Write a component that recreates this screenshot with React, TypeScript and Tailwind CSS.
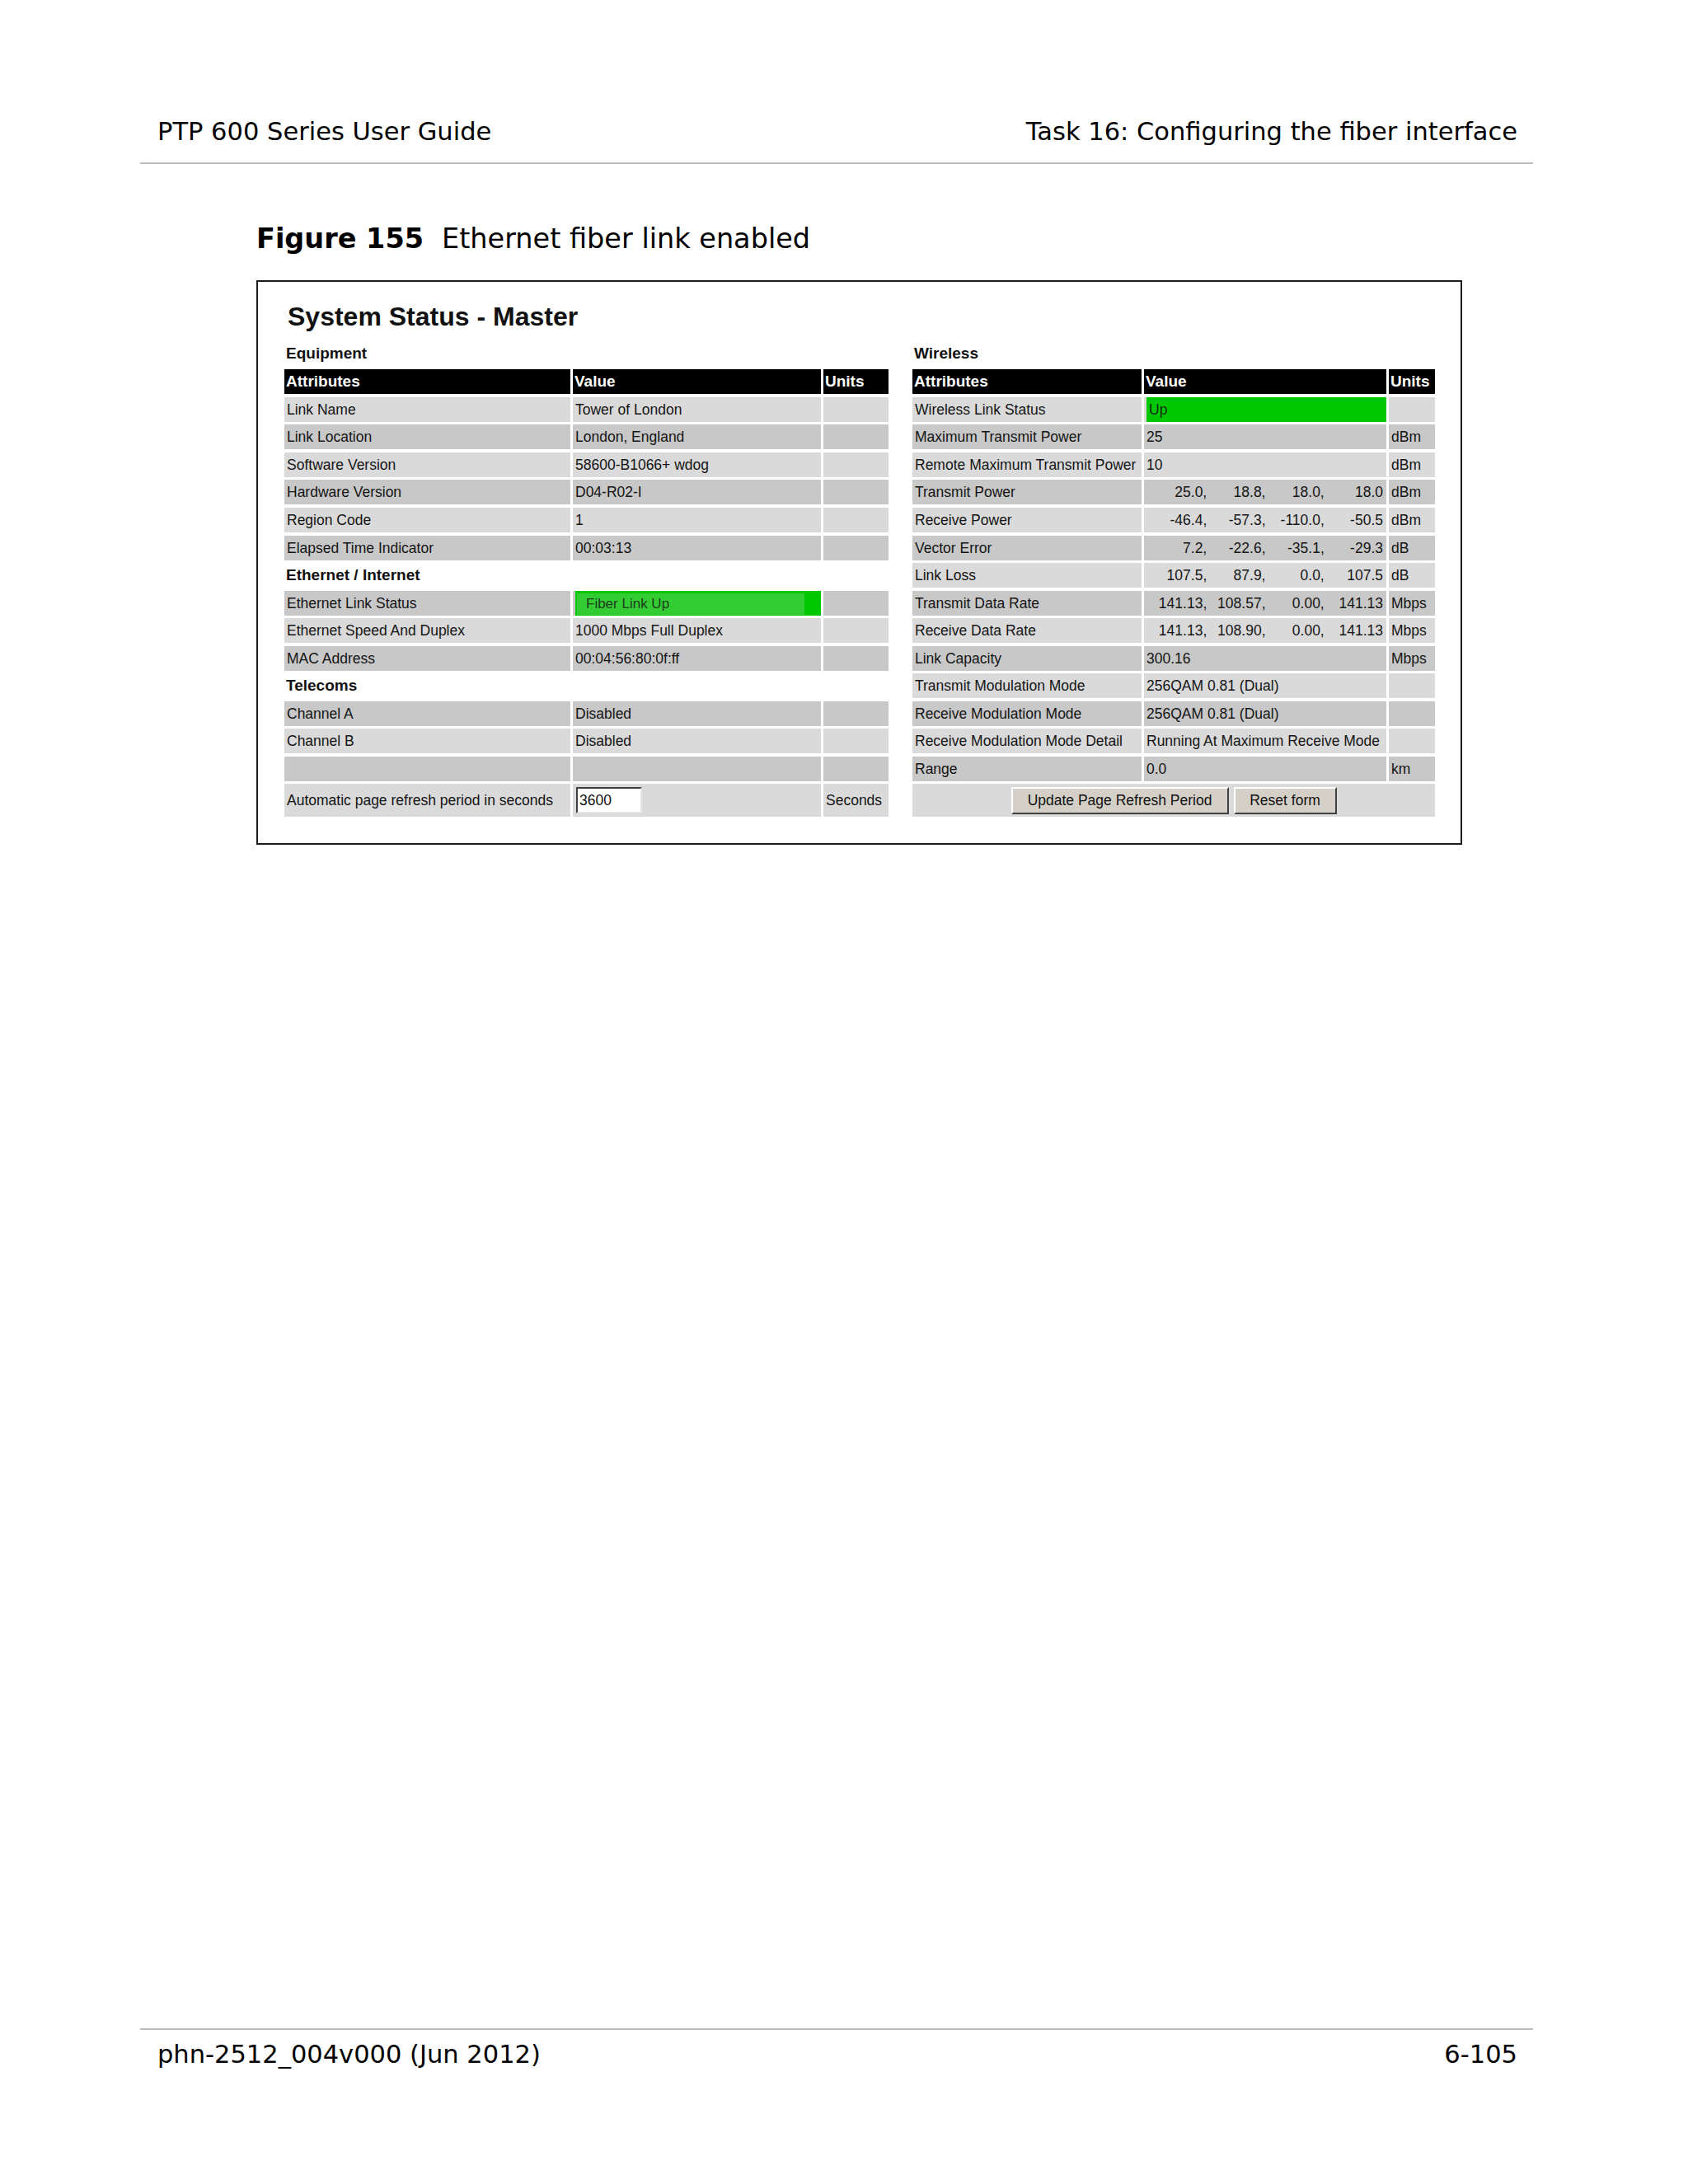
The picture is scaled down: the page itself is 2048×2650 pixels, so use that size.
type Row = {
  kind: 'label' | 'header' | 'row' | 'empty'
  label?: string
  attr?: string
  value?: React.ReactNode
  units?: string
  dark?: boolean
}

const cellText = 'text-[17.5px] leading-[30px] text-[#151515] pl-[3px] whitespace-nowrap overflow-hidden'

function Multi({ values }: { values: string[] }) {
  return (
    <div className="grid grid-cols-4 w-full pl-[2px] pr-[4px]">
      {values.map((v, i) => (
        <span key={i} className="text-right whitespace-pre">
          {v}
        </span>
      ))}
    </div>
  )
}

function FiberUp() {
  return (
    <div className="h-full w-full bg-[#00c800] pt-[3px] pb-[1px] pl-[2px]">
      <div className="h-full w-[276px] bg-[#33cc33] flex items-center pl-[11px] text-[#1d3d1d] text-[17px]">
        Fiber Link Up
      </div>
    </div>
  )
}

function StatusTable({ rows, cols }: { rows: Row[]; cols: string }) {
  return (
    <div className={`grid ${cols} gap-x-[3px] gap-y-[3.56px] auto-rows-[30px]`}>
      {rows.map((r, i) => {
        if (r.kind === 'label') {
          return (
            <div key={i} className="col-span-3 flex items-center pl-[2px] text-[19px] font-bold text-[#111]">
              {r.label}
            </div>
          )
        }
        if (r.kind === 'header') {
          return ['Attributes', 'Value', 'Units'].map((h) => (
            <div key={`${i}-${h}`} className="bg-black text-white font-bold text-[19px] leading-[30px] pl-[2px]">
              {h}
            </div>
          ))
        }
        const bg = r.dark ? 'bg-[#c8c8c8]' : 'bg-[#dadada]'
        return [
          <div key={`${i}-a`} className={`${bg} ${cellText}`}>
            {r.attr}
          </div>,
          <div key={`${i}-v`} className={`${bg} ${cellText} flex items-center ${typeof r.value === 'string' ? '' : 'pl-0'}`}>
            {r.value}
          </div>,
          <div key={`${i}-u`} className={`${bg} ${cellText}`}>
            {r.units}
          </div>,
        ]
      })}
    </div>
  )
}

const leftRows: Row[] = [
  { kind: 'label', label: 'Equipment' },
  { kind: 'header' },
  { kind: 'row', attr: 'Link Name', value: 'Tower of London' },
  { kind: 'row', attr: 'Link Location', value: 'London, England', dark: true },
  { kind: 'row', attr: 'Software Version', value: '58600-B1066+ wdog' },
  { kind: 'row', attr: 'Hardware Version', value: 'D04-R02-I', dark: true },
  { kind: 'row', attr: 'Region Code', value: '1' },
  { kind: 'row', attr: 'Elapsed Time Indicator', value: '00:03:13', dark: true },
  { kind: 'label', label: 'Ethernet / Internet' },
  { kind: 'row', attr: 'Ethernet Link Status', value: <FiberUp />, dark: true },
  { kind: 'row', attr: 'Ethernet Speed And Duplex', value: '1000 Mbps Full Duplex' },
  { kind: 'row', attr: 'MAC Address', value: '00:04:56:80:0f:ff', dark: true },
  { kind: 'label', label: 'Telecoms' },
  { kind: 'row', attr: 'Channel A', value: 'Disabled', dark: true },
  { kind: 'row', attr: 'Channel B', value: 'Disabled' },
  { kind: 'row', attr: '', value: '', dark: true },
]

const rightRows: Row[] = [
  { kind: 'label', label: 'Wireless' },
  { kind: 'header' },
  {
    kind: 'row',
    attr: 'Wireless Link Status',
    value: <div className="h-full w-full bg-[#00c800] text-[#153015] pl-[3px] leading-[30px]">Up</div>,
  },
  { kind: 'row', attr: 'Maximum Transmit Power', value: '25', units: 'dBm', dark: true },
  { kind: 'row', attr: 'Remote Maximum Transmit Power', value: '10', units: 'dBm' },
  { kind: 'row', attr: 'Transmit Power', value: <Multi values={['25.0,', '18.8,', '18.0,', '18.0']} />, units: 'dBm', dark: true },
  { kind: 'row', attr: 'Receive Power', value: <Multi values={['-46.4,', '-57.3,', '-110.0,', '-50.5']} />, units: 'dBm' },
  { kind: 'row', attr: 'Vector Error', value: <Multi values={['7.2,', '-22.6,', '-35.1,', '-29.3']} />, units: 'dB', dark: true },
  { kind: 'row', attr: 'Link Loss', value: <Multi values={['107.5,', '87.9,', '0.0,', '107.5']} />, units: 'dB' },
  { kind: 'row', attr: 'Transmit Data Rate', value: <Multi values={['141.13,', '108.57,', '0.00,', '141.13']} />, units: 'Mbps', dark: true },
  { kind: 'row', attr: 'Receive Data Rate', value: <Multi values={['141.13,', '108.90,', '0.00,', '141.13']} />, units: 'Mbps' },
  { kind: 'row', attr: 'Link Capacity', value: '300.16', units: 'Mbps', dark: true },
  { kind: 'row', attr: 'Transmit Modulation Mode', value: '256QAM 0.81 (Dual)' },
  { kind: 'row', attr: 'Receive Modulation Mode', value: '256QAM 0.81 (Dual)', dark: true },
  { kind: 'row', attr: 'Receive Modulation Mode Detail', value: 'Running At Maximum Receive Mode' },
  { kind: 'row', attr: 'Range', value: '0.0', units: 'km', dark: true },
]

const btn =
  'h-[33px] bg-[#d4d0c8] border-2 border-t-white border-l-white border-r-[#404040] border-b-[#404040] text-[17.5px] text-[#111] leading-none'

export default function App() {
  return (
    <div className="w-[2048px] h-[2650px] bg-white flex flex-col font-['DejaVu_Sans',sans-serif] text-black">
      <div className="ml-[170px] w-[1690px]">
        <div className="pt-[142px] pl-[21px] pr-[19px] flex justify-between text-[30.5px] leading-[36px]">
          <span>PTP 600 Series User Guide</span>
          <span>Task 16: Configuring the fiber interface</span>
        </div>
        <div className="mt-[19px] h-[2px] bg-[#bdbdbd]" />
      </div>

      <div className="mt-[71px] ml-[311px] text-[33.5px] leading-[40px] whitespace-nowrap">
        <span className="font-bold">Figure 155</span>
        <span className="ml-[22px]">Ethernet fiber link enabled</span>
      </div>

      <div className="mt-[30px] ml-[311px] w-[1463px] border-2 border-[#1c1c1c] pl-[32px] pt-[24px] pb-[32px] font-['Liberation_Sans',Arial,sans-serif]">
        <h1 className="ml-[4px] text-[32px] leading-[36px] font-bold text-[#111]">System Status - Master</h1>
        <div className="mt-[12.7px] flex gap-[29px]">
          <div>
            <StatusTable rows={leftRows} cols="grid-cols-[347px_301px_79px]" />
            <div className="mt-[3.56px] grid grid-cols-[347px_301px_79px] gap-x-[3px] h-[40px]">
              <div className={`bg-[#dadada] flex items-center ${cellText}`}>Automatic page refresh period in seconds</div>
              <div className="bg-[#dadada] flex items-center pl-[4px]">
                <input
                  defaultValue="3600"
                  className="w-[80px] h-[32px] bg-white border-2 border-t-[#404040] border-l-[#404040] border-b-[#e4e4e4] border-r-[#e4e4e4] text-[17.5px] text-[#111] pl-[2px] outline-none"
                />
              </div>
              <div className={`bg-[#dadada] flex items-center ${cellText}`}>Seconds</div>
            </div>
          </div>
          <div>
            <StatusTable rows={rightRows} cols="grid-cols-[278px_294px_56px]" />
            <div className="mt-[3.56px] h-[40px] bg-[#dadada] flex items-center justify-center gap-[6px]">
              <button className={`${btn} w-[264px]`}>Update Page Refresh Period</button>
              <button className={`${btn} w-[125px]`}>Reset form</button>
            </div>
          </div>
        </div>
      </div>

      <div className="mt-auto ml-[170px] w-[1690px] pb-[139px]">
        <div className="h-[2px] bg-[#bdbdbd]" />
        <div className="mt-[11.6px] pl-[21px] pr-[19px] flex justify-between text-[30.5px] leading-[36px]">
          <span>phn-2512_004v000 (Jun 2012)</span>
          <span>6-105</span>
        </div>
      </div>
    </div>
  )
}
